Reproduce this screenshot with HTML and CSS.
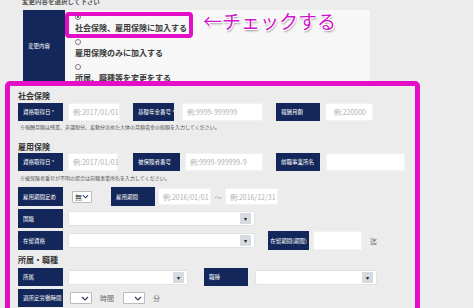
FILE: index.html
```html
<!DOCTYPE html>
<html lang="ja">
<head>
    <meta charset="UTF-8">
    <title>変更内容</title>
    <link rel="stylesheet" href="styles.css">
</head>
<body>
<div class="page">

    <!-- Choose change type -->
    <p class="choose-title">変更内容を選択して下さい</p>
    <div class="choose">
        <div class="choose-label">変更内容</div>
        <div class="choose-options">
            <div class="option"><span class="radio checked"></span><p>社会保険、雇用保険に加入する</p></div>
            <div class="option"><span class="radio"></span><p>雇用保険のみに加入する</p></div>
            <div class="option"><span class="radio"></span><p>所属、職種等を変更をする</p></div>
        </div>
        <div class="callout"></div>
        <div class="callout-note">←チェックする</div>
    </div>

    <!-- Form -->
    <div class="form-box">
        <h3 class="sec-title first">社会保険</h3>
        <div class="row">
            <div class="lbl">資格取得日 *</div>
            <div class="inp w52 ml5">例:2017/01/01</div>
            <div class="lbl w41 ml13">基礎年金番号 *</div>
            <div class="inp w81 ml8">例:9999-999999</div>
            <div class="lbl w44 ml13">報酬月額</div>
            <div class="inp w48 ml5 right">例:220000</div>
        </div>
        <p class="note">※報酬月額は残業、非課税分、変動分含めた大体の月額賃金の総額を入力してください。</p>

        <h3 class="sec-title">雇用保険</h3>
        <div class="row tight">
            <div class="lbl">資格取得日 *</div>
            <div class="inp w50 ml5">例:2017/01/01</div>
            <div class="lbl w47 ml15">被保険者番号</div>
            <div class="inp w78 ml5">例:9999-999999-9</div>
            <div class="lbl w44 ml13">前職事業所名</div>
            <div class="inp w79 ml6"></div>
        </div>
        <p class="note n2">※被保険者番号が不明の場合は前職事業所名を入力してください。</p>

        <div class="row r3 tall">
            <div class="lbl">雇用期間定め</div>
            <div class="mini ml9">無<svg width="8" height="5" viewBox="0 0 8 5"><path d="M1 1 L4 4 L7 1" fill="none" stroke="#34405e" stroke-width="1.2"/></svg></div>
            <div class="lbl w44 ml19">雇用期間</div>
            <div class="inp w53 ml3 short">例:2016/01/01</div>
            <span class="tilde">〜</span>
            <div class="inp w53 short">例:2016/12/31</div>
        </div>
        <div class="row r4 tall">
            <div class="lbl">国籍</div>
            <div class="select w187 ml5"><span class="arrow">▾</span></div>
        </div>
        <div class="row r4 tall">
            <div class="lbl">在留資格</div>
            <div class="select w187 ml5"><span class="arrow">▾</span></div>
            <div class="lbl w41 ml13 center">在留期間(期限)</div>
            <div class="inp w49 ml4"></div>
            <span class="unit ml8">迄</span>
        </div>

        <h3 class="sec-title s3">所属・職種</h3>
        <div class="row r6">
            <div class="lbl">所属</div>
            <div class="select w120 ml5"><span class="arrow">▾</span></div>
            <div class="lbl w44 ml16">職種</div>
            <div class="select w122 ml7"><span class="arrow">▾</span></div>
        </div>
        <div class="row r6">
            <div class="lbl">週所定労働時間</div>
            <div class="mini wide ml7"><svg width="8" height="5" viewBox="0 0 8 5"><path d="M1 1 L4 4 L7 1" fill="none" stroke="#34405e" stroke-width="1.2"/></svg></div>
            <span class="unit ml8">時間</span>
            <div class="mini wide ml9"><svg width="8" height="5" viewBox="0 0 8 5"><path d="M1 1 L4 4 L7 1" fill="none" stroke="#34405e" stroke-width="1.2"/></svg></div>
            <span class="unit ml8">分</span>
        </div>
    </div>

</div>
</body>
</html>
```

FILE: styles.css
```css
/* Global */
* {
    margin: 0;
    padding: 0;
    box-sizing: border-box;
}
body {
    font-family: "Noto Sans CJK JP", "Noto Sans", sans-serif;
    background: #ececec;
    color: #333;
    overflow: hidden;
}
.page {
    margin-top: -3px;
}

/* Choose change type */
.choose-title {
    margin-left: 22px;
    font-size: 6.5px;
    line-height: 8px;
    font-weight: bold;
    color: #555;
}
.choose {
    position: relative;
    display: flex;
    margin: 5px 0 0 23px;
    height: 71px;
}
.choose-label {
    width: 42px;
    background: #14275a;
    color: #fff;
    font-size: 5.5px;
    display: flex;
    align-items: center;
    padding-left: 5px;
}
.choose-options {
    width: 305px;
    background: #f7f7f7;
    padding: 4px 10px 0;
    overflow: hidden;
}
.option {
    margin-bottom: 6px;
}
.option p {
    font-size: 8px;
    line-height: 10px;
    font-weight: bold;
    color: #3a3a3a;
}
.radio {
    display: block;
    width: 6px;
    height: 6px;
    margin-bottom: 3px;
    border: 1px solid #7a7a7a;
    border-radius: 50%;
    background: #fff;
    position: relative;
}
.radio.checked::after {
    content: '';
    position: absolute;
    left: 1px;
    top: 1px;
    width: 2px;
    height: 2px;
    border-radius: 50%;
    background: #333;
}
.callout {
    position: absolute;
    left: 42px;
    top: 2px;
    width: 128px;
    height: 26px;
    border: 4px solid #e40dc8;
    border-radius: 4px;
}
.callout-note {
    position: absolute;
    left: 180px;
    top: -1px;
    font-size: 19px;
    line-height: 24px;
    color: #cf16c8;
    text-shadow: 1px 1px 0 #fff, -1px -1px 0 #fff, 1px -1px 0 #fff, -1px 1px 0 #fff, 1px 2px 2px rgba(0, 0, 0, 0.45);
}

/* Form box */
.form-box {
    margin-left: 5px;
    width: 415px;
    height: 260px;
    border: 5px solid #e40dc8;
    border-radius: 5px;
    padding-left: 8px;
}
.sec-title {
    font-size: 8px;
    line-height: 10px;
    font-weight: bold;
    color: #333;
    margin-top: 11px;
}
.sec-title.first {
    margin-top: 5px;
}
.sec-title.s3 {
    margin-top: 5px;
}
.note {
    font-size: 5px;
    line-height: 8px;
    color: #555;
    margin: 2px 0 0 2px;
}
.note.n2 {
    margin-top: 3px;
}
.row {
    display: flex;
    align-items: center;
    height: 18px;
    margin-top: 2px;
}
.row.tight {
    margin-top: 1px;
}
.row.tall {
    height: 19px;
    margin-top: 3px;
}
.row.r3 {
    margin-top: 5px;
}
.row.r6 {
    margin-top: 3px;
}
.lbl {
    width: 45px;
    height: 100%;
    background: #14275a;
    color: #fff;
    font-size: 5.5px;
    display: flex;
    align-items: center;
    padding-left: 5px;
    white-space: nowrap;
}
.lbl.center {
    justify-content: center;
    padding-left: 0;
}
.inp {
    height: 100%;
    background: #fff;
    border: 1px solid #f2f2f2;
    font-size: 7px;
    color: #b0b0b0;
    display: flex;
    align-items: center;
    padding-left: 4px;
    white-space: nowrap;
}
.inp.right {
    justify-content: flex-end;
    padding-right: 6px;
}
.inp.short {
    height: 17px;
}
.tilde {
    font-size: 7px;
    color: #999;
    width: 14px;
    text-align: center;
}
.mini {
    width: 20px;
    height: 12px;
    background: #fff;
    border: 1px solid #bbb;
    border-radius: 1px;
    font-size: 7px;
    color: #333;
    display: flex;
    align-items: center;
    justify-content: space-between;
    padding: 0 2px;
}
.mini.wide {
    width: 22px;
    justify-content: flex-end;
}
.select {
    height: 15px;
    background: #fff;
    border: 1px solid #e2e2e2;
    border-radius: 2px;
    display: flex;
    align-items: center;
    justify-content: flex-end;
    padding-right: 3px;
}
.arrow {
    width: 11px;
    height: 11px;
    background: #d6dbe1;
    color: #222;
    font-size: 6px;
    line-height: 11px;
    text-align: center;
}
.unit {
    font-size: 7px;
    color: #666;
}

/* Spacing helpers */
.w41 { width: 41px; }
.w44 { width: 44px; }
.w47 { width: 47px; }
.w48 { width: 48px; }
.w49 { width: 49px; }
.w50 { width: 50px; }
.w52 { width: 52px; }
.w53 { width: 53px; }
.w78 { width: 78px; }
.w79 { width: 79px; }
.w81 { width: 81px; }
.w120 { width: 120px; }
.w122 { width: 122px; }
.w187 { width: 187px; }
.ml3 { margin-left: 3px; }
.ml4 { margin-left: 4px; }
.ml5 { margin-left: 5px; }
.ml6 { margin-left: 6px; }
.ml7 { margin-left: 7px; }
.ml8 { margin-left: 8px; }
.ml9 { margin-left: 9px; }
.ml13 { margin-left: 13px; }
.ml15 { margin-left: 15px; }
.ml16 { margin-left: 16px; }
.ml19 { margin-left: 19px; }
```
